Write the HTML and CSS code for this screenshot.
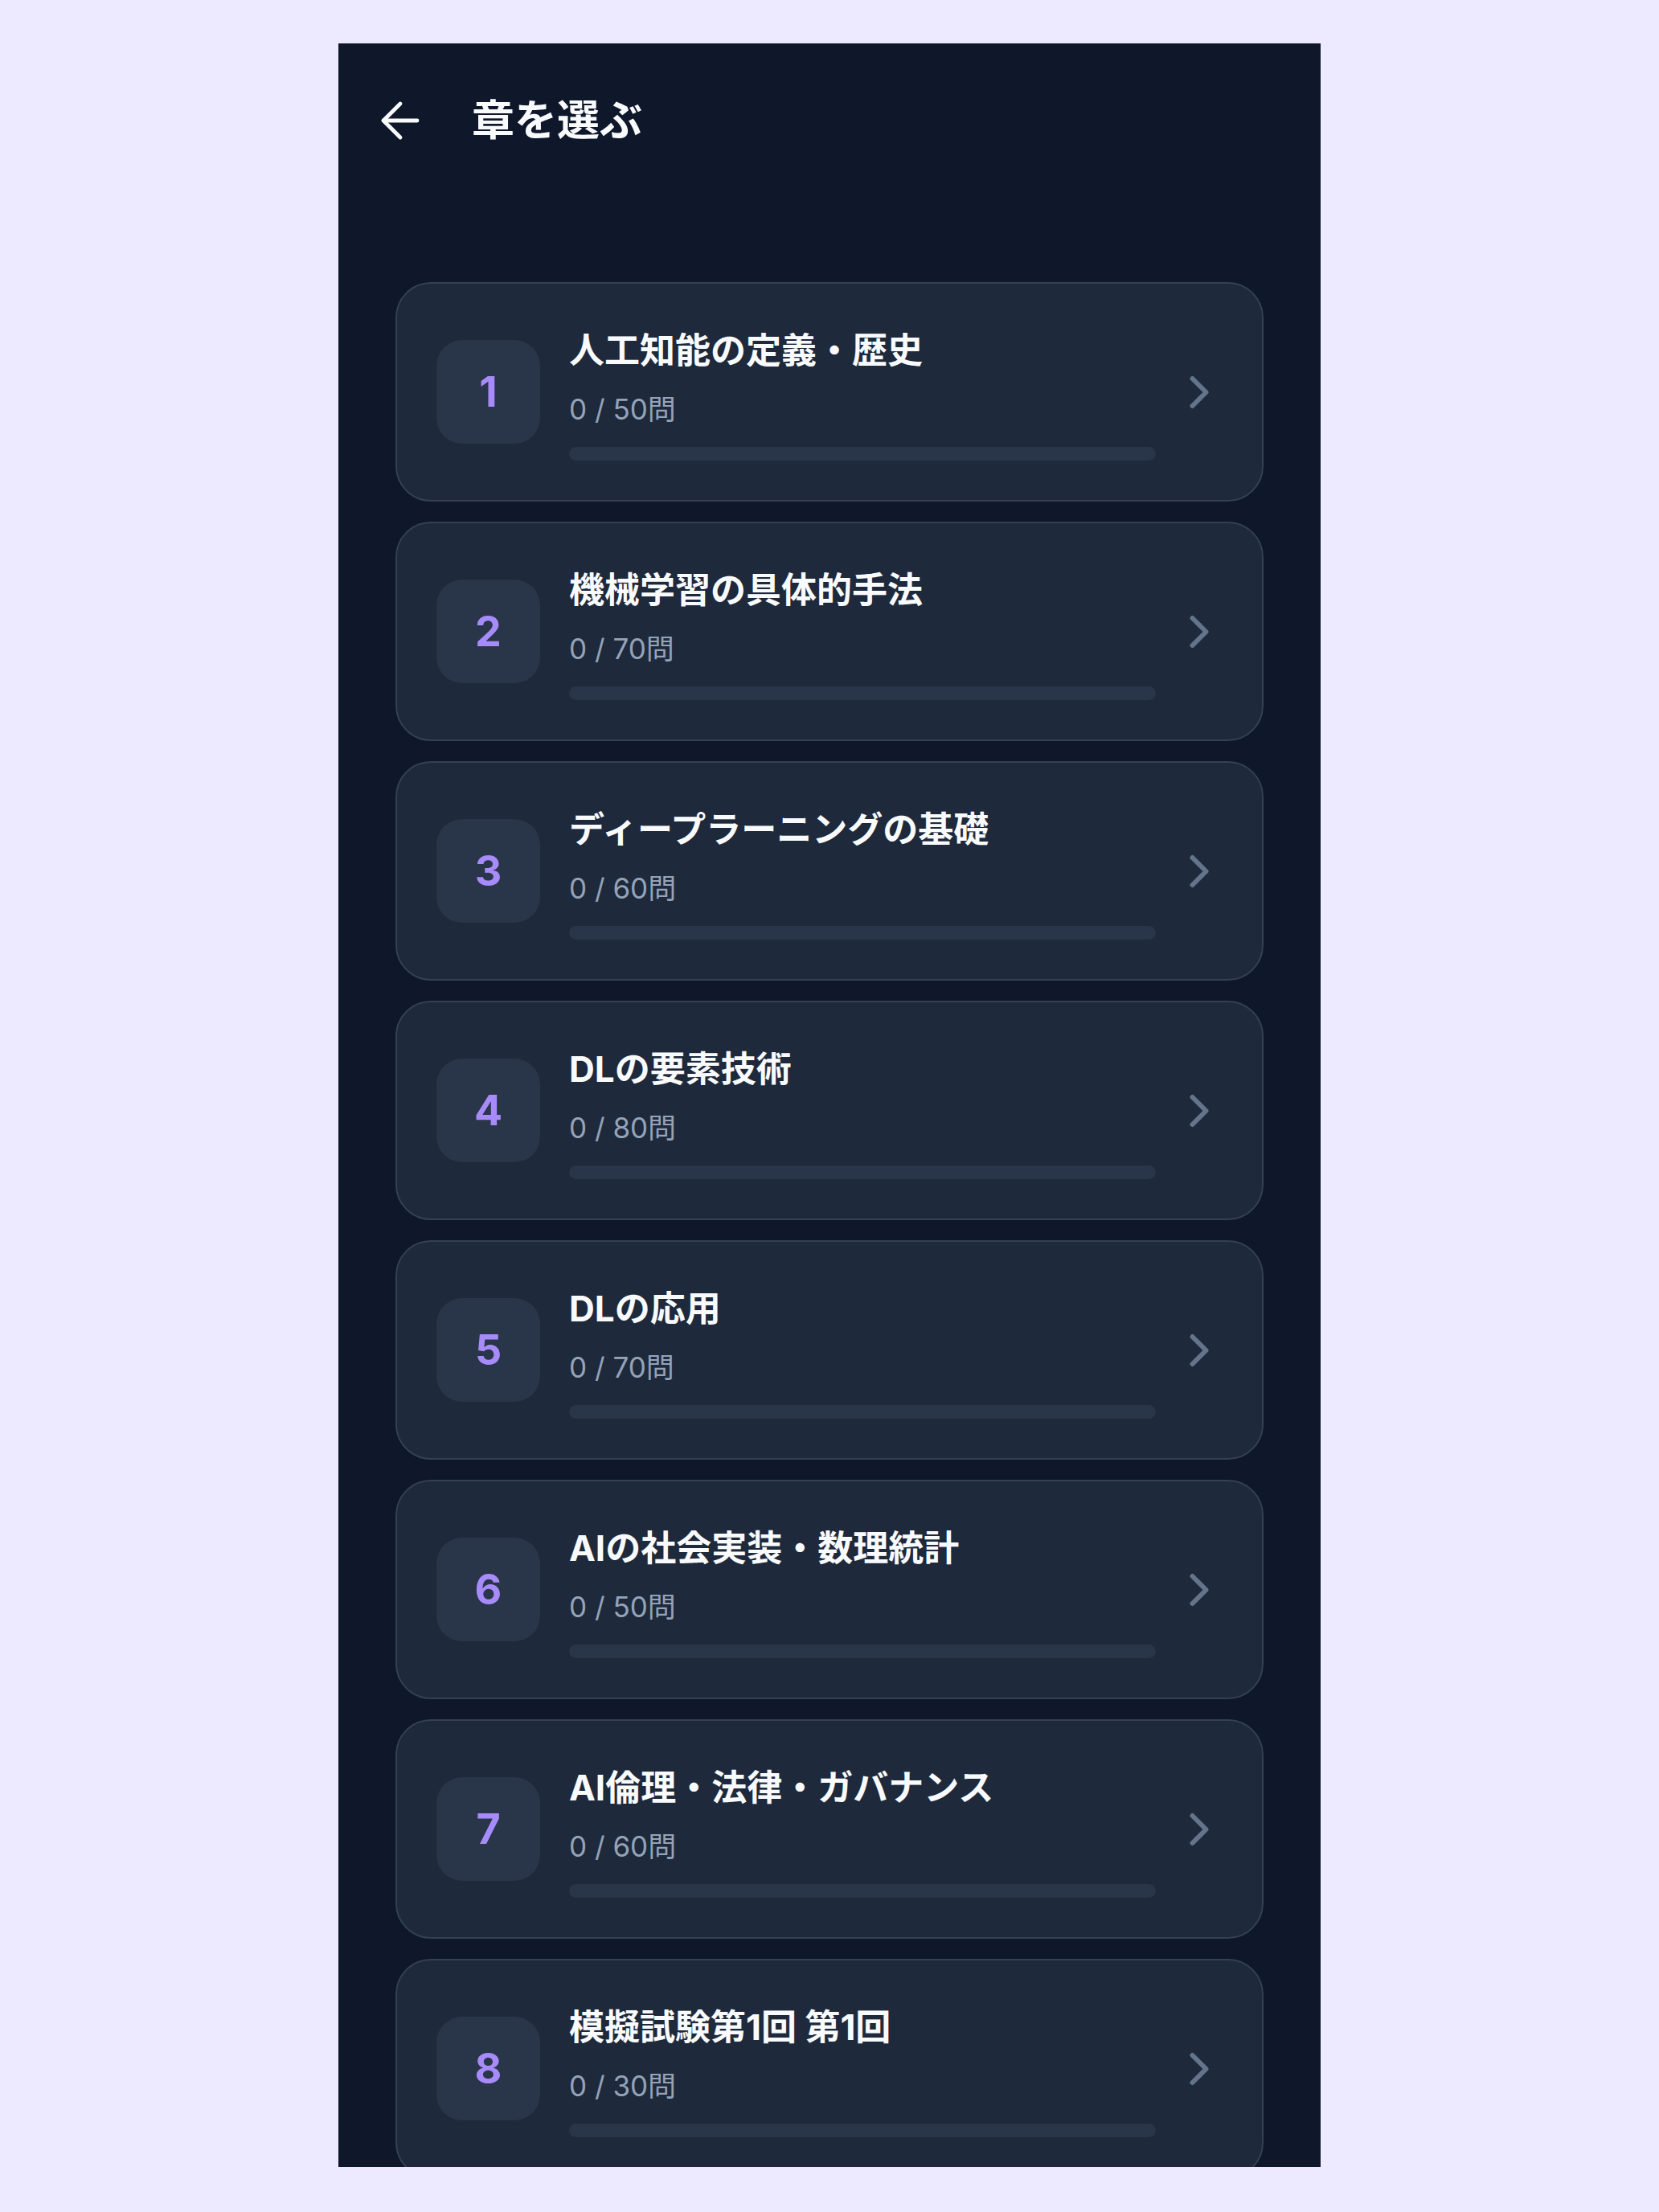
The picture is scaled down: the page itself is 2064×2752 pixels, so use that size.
FILE: index.html
```html
<!DOCTYPE html>
<html lang="ja">
<head>
    <meta charset="UTF-8">
    <meta name="viewport" content="width=device-width, initial-scale=1.0">
    <title>章を選ぶ</title>
    <link rel="stylesheet" href="styles.css">
</head>
<body>
    <div class="screen">
        <header class="top-bar">
            <button class="back-btn" aria-label="戻る">
                <svg viewBox="0 0 24 24" fill="none" stroke="currentColor" stroke-width="1.6" stroke-linecap="round" stroke-linejoin="round">
                    <path d="m12 19-7-7 7-7"/>
                    <path d="M19 12H5"/>
                </svg>
            </button>
            <h1>章を選ぶ</h1>
        </header>

        <main class="chapter-list" id="chapterList"></main>
    </div>

    <script>
        const chapters = [
            { title: '人工知能の定義・歴史', done: 0, total: 50 },
            { title: '機械学習の具体的手法', done: 0, total: 70 },
            { title: 'ディープラーニングの基礎', done: 0, total: 60 },
            { title: 'DLの要素技術', done: 0, total: 80 },
            { title: 'DLの応用', done: 0, total: 70 },
            { title: 'AIの社会実装・数理統計', done: 0, total: 50 },
            { title: 'AI倫理・法律・ガバナンス', done: 0, total: 60 },
            { title: '模擬試験第1回 第1回', done: 0, total: 30 }
        ];

        const chevron = '<svg class="chevron" viewBox="0 0 24 24" fill="none" stroke="currentColor" stroke-width="2.1" stroke-linecap="round" stroke-linejoin="round"><path d="m9 18 6-6-6-6"/></svg>';

        function renderChapters() {
            const list = document.getElementById('chapterList');
            list.innerHTML = chapters.map((ch, i) => {
                const pct = ch.total ? (ch.done / ch.total) * 100 : 0;
                return `
                <a class="chapter-card" href="#">
                    <div class="chapter-num">${i + 1}</div>
                    <div class="chapter-info">
                        <div class="chapter-title">${ch.title}</div>
                        <div class="chapter-count">${ch.done} / ${ch.total}問</div>
                        <div class="progress"><div class="progress-fill" style="width: ${pct}%"></div></div>
                    </div>
                    ${chevron}
                </a>`;
            }).join('');
        }

        renderChapters();
    </script>
</body>
</html>
```

FILE: styles.css
```css
body {
    margin: 0;
    background: #ede9fe;
    font-family: 'Inter', 'Noto Sans CJK JP', sans-serif;
}

.screen {
    width: 1222px;
    height: 2642px;
    margin: 54px auto 0;
    background: #0f172a;
    overflow: hidden;
}

.top-bar {
    display: flex;
    align-items: center;
    gap: 53px;
    padding: 60px 41px;
}

.back-btn {
    width: 72px;
    height: 72px;
    padding: 0;
    border: none;
    background: none;
    color: #f8fafc;
    cursor: pointer;
}

.back-btn svg {
    width: 72px;
    height: 72px;
    display: block;
}

.top-bar h1 {
    margin: 0;
    color: #f8fafc;
    font-size: 53px;
    font-weight: bold;
    line-height: 72px;
}

.chapter-list {
    display: flex;
    flex-direction: column;
    gap: 25px;
    padding: 105px 71px 0;
}

.chapter-card {
    display: flex;
    align-items: center;
    flex-shrink: 0;
    box-sizing: border-box;
    height: 273px;
    padding: 0 44px 0 49px;
    background: #1e293b;
    border: 2px solid #334155;
    border-radius: 44px;
    text-decoration: none;
}

.chapter-num {
    width: 129px;
    height: 129px;
    flex-shrink: 0;
    display: flex;
    align-items: center;
    justify-content: center;
    background: #293548;
    border-radius: 32px;
    color: #a78bfa;
    font-size: 52px;
    font-weight: bold;
}

.chapter-info {
    flex: 1;
    margin: 0 20px 0 36px;
    padding-top: 4px;
}

.chapter-title {
    color: #f8fafc;
    font-size: 44px;
    font-weight: bold;
    line-height: 60px;
}

.chapter-count {
    margin-top: 19px;
    color: #94a3b8;
    font-size: 35px;
    line-height: 48px;
}

.progress {
    margin-top: 23px;
    height: 17px;
    background: #293548;
    border-radius: 9px;
    overflow: hidden;
}

.progress-fill {
    height: 100%;
    background: #a78bfa;
}

.chevron {
    width: 68px;
    height: 68px;
    flex-shrink: 0;
    color: #64748b;
}
```
